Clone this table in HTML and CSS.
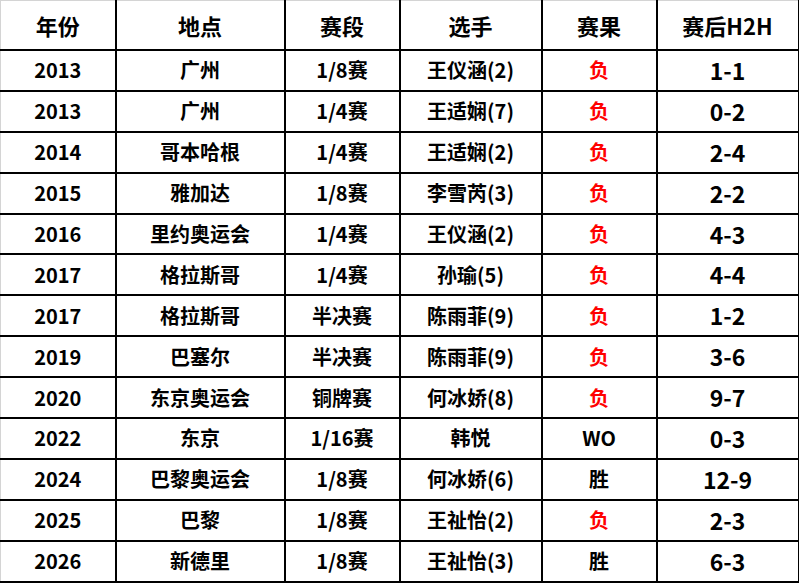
FILE: index.html
```html
<!DOCTYPE html>
<html lang="zh-CN">
<head>
<meta charset="utf-8">
<title>H2H</title>
<link rel="stylesheet" href="styles.css">
</head>
<body>
<table class="h2h">
  <colgroup>
    <col class="c-year"><col class="c-place"><col class="c-round"><col class="c-player"><col class="c-result"><col class="c-score">
  </colgroup>
  <thead>
    <tr><th>年份</th><th>地点</th><th>赛段</th><th>选手</th><th>赛果</th><th>赛后H2H</th></tr>
  </thead>
  <tbody>
    <tr><td>2013</td><td>广州</td><td>1/8赛</td><td>王仪涵(2)</td><td class="lose">负</td><td class="score">1-1</td></tr>
    <tr><td>2013</td><td>广州</td><td>1/4赛</td><td>王适娴(7)</td><td class="lose">负</td><td class="score">0-2</td></tr>
    <tr><td>2014</td><td>哥本哈根</td><td>1/4赛</td><td>王适娴(2)</td><td class="lose">负</td><td class="score">2-4</td></tr>
    <tr><td>2015</td><td>雅加达</td><td>1/8赛</td><td>李雪芮(3)</td><td class="lose">负</td><td class="score">2-2</td></tr>
    <tr><td>2016</td><td>里约奥运会</td><td>1/4赛</td><td>王仪涵(2)</td><td class="lose">负</td><td class="score">4-3</td></tr>
    <tr><td>2017</td><td>格拉斯哥</td><td>1/4赛</td><td>孙瑜(5)</td><td class="lose">负</td><td class="score">4-4</td></tr>
    <tr><td>2017</td><td>格拉斯哥</td><td>半决赛</td><td>陈雨菲(9)</td><td class="lose">负</td><td class="score">1-2</td></tr>
    <tr><td>2019</td><td>巴塞尔</td><td>半决赛</td><td>陈雨菲(9)</td><td class="lose">负</td><td class="score">3-6</td></tr>
    <tr><td>2020</td><td>东京奥运会</td><td>铜牌赛</td><td>何冰娇(8)</td><td class="lose">负</td><td class="score">9-7</td></tr>
    <tr><td>2022</td><td>东京</td><td>1/16赛</td><td>韩悦</td><td>WO</td><td class="score">0-3</td></tr>
    <tr><td>2024</td><td>巴黎奥运会</td><td>1/8赛</td><td>何冰娇(6)</td><td>胜</td><td class="score">12-9</td></tr>
    <tr><td>2025</td><td>巴黎</td><td>1/8赛</td><td>王祉怡(2)</td><td class="lose">负</td><td class="score">2-3</td></tr>
    <tr><td>2026</td><td>新德里</td><td>1/8赛</td><td>王祉怡(3)</td><td>胜</td><td class="score">6-3</td></tr>
  </tbody>
</table>
</body>
</html>
```

FILE: styles.css
```css
html, body {
  margin: 0;
  padding: 0;
  background: #ffffff;
}

.h2h {
  border-collapse: collapse;
  table-layout: fixed;
  width: 798px;
  font-family: "Noto Sans CJK SC", "Noto Sans", sans-serif;
  font-weight: 700;
  color: #000;
}

.c-year { width: 115px; }
.c-place { width: 169px; }
.c-round { width: 115px; }
.c-player { width: 142px; }
.c-result { width: 115px; }
.c-score { width: 142px; }

.h2h th,
.h2h td {
  border: 2px solid #000;
  text-align: center;
  vertical-align: middle;
  padding: 0;
  line-height: 1;
}

.h2h th {
  height: 48px;
  font-size: 22px;
  font-weight: 700;
}

.h2h td {
  height: 38.9px;
  font-size: 20px;
}

.h2h thead th {
  border-top: 1px solid #d4d4d4;
}

.h2h th:first-child,
.h2h td:first-child {
  border-left: 1px solid #d4d4d4;
}

.h2h .lose {
  color: #ff0000;
}

.h2h .score {
  font-size: 23px;
}
```
